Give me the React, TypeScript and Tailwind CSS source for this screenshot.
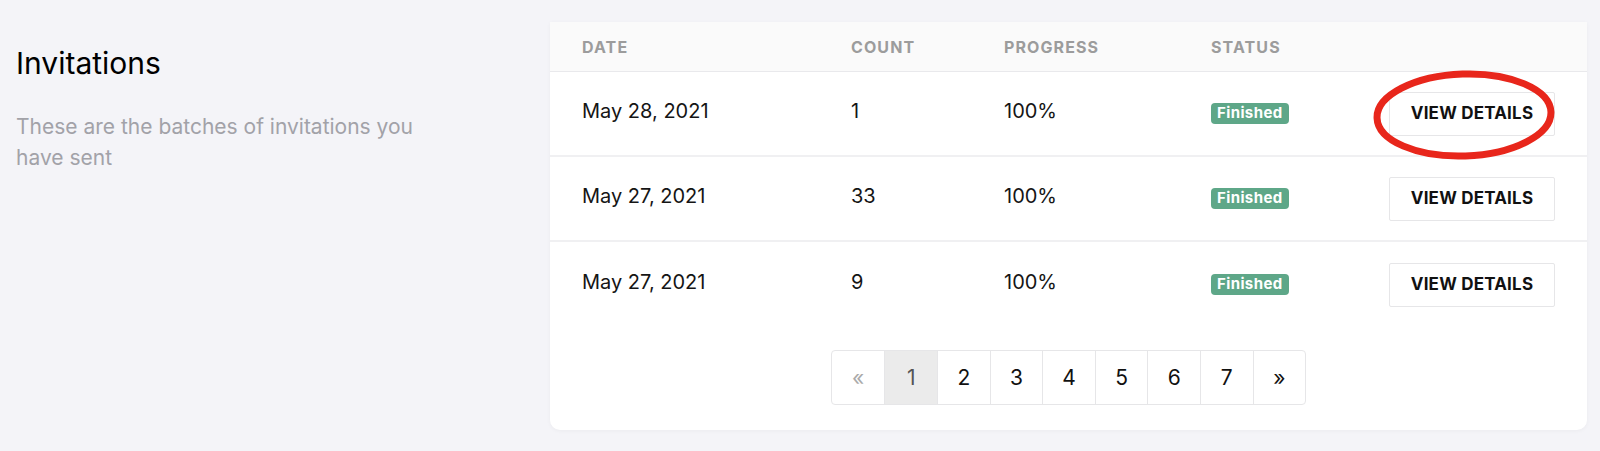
import React from "react";

type Batch = {
    date: string;
    count: number;
    progress: string;
    status: string;
};

const batches: Batch[] = [
    { date: "May 28, 2021", count: 1, progress: "100%", status: "Finished" },
    { date: "May 27, 2021", count: 33, progress: "100%", status: "Finished" },
    { date: "May 27, 2021", count: 9, progress: "100%", status: "Finished" },
];

const pages = ["«", "1", "2", "3", "4", "5", "6", "7", "»"];

const cols = "grid grid-cols-[269px_153px_207px_1fr_166px] items-center px-8";

const App = () => {
    return (
        <div className="flex h-[451px] w-[1600px] bg-[#f4f4f8] font-['Inter',sans-serif] overflow-hidden">
            <div className="w-[550px] pl-4 pt-[45px]">
                <h2 className="text-[30px] leading-[36px] font-normal text-black">Invitations</h2>
                <p className="mt-[30px] w-[420px] text-[21px] leading-[31px] text-[#a2a2a8]">
                    These are the batches of invitations you have sent
                </p>
            </div>

            <div className="mt-[22px] h-[408px] w-[1037px] rounded-b-[10px] bg-white shadow-[0_1px_4px_rgba(0,0,0,0.04)]">
                <div className={`${cols} h-[50px] border-b border-[#e9e9ec] bg-[#fafafa] text-[16px] font-bold tracking-[1.1px] text-[#9c9c9c]`}>
                    <div>DATE</div>
                    <div>COUNT</div>
                    <div>PROGRESS</div>
                    <div>STATUS</div>
                    <div></div>
                </div>

                {batches.map((b, index) => (
                    <div
                        key={index}
                        className={`${cols} h-[85px] text-[20px] text-[#151515] ${index < batches.length - 1 ? "border-b-2 border-[#f0f0f2]" : ""}`}
                    >
                        <div className="pb-[6px]">{b.date}</div>
                        <div className="pb-[6px]">{b.count}</div>
                        <div className="pb-[6px]">{b.progress}</div>
                        <div className="flex">
                            <span className="inline-flex h-[21px] items-center rounded-[4px] bg-[#5ea788] px-[6px] text-[15px] font-bold tracking-[0.4px] text-white">
                                {b.status}
                            </span>
                        </div>
                        <div className="relative">
                            <button className="h-[44px] w-[166px] rounded-[2px] border border-[#e6e6e8] bg-white text-[17px] font-bold tracking-[0.2px] text-[#111]">
                                VIEW DETAILS
                            </button>
                            {index === 0 && (
                                <svg
                                    className="pointer-events-none absolute left-[-20px] top-[-26px] -rotate-2"
                                    width="190"
                                    height="98"
                                    viewBox="0 0 190 98"
                                >
                                    <ellipse cx="95" cy="49" rx="87" ry="41" fill="none" stroke="#e8261b" strokeWidth="7" />
                                </svg>
                            )}
                        </div>
                    </div>
                ))}

                <div className="mt-[23px] flex justify-center">
                    <div className="flex h-[55px] rounded-[4px] border border-[#e6e6e8]">
                        {pages.map((p, i) => (
                            <div
                                key={i}
                                className={`flex w-[52.6px] items-center justify-center text-[21px] ${i > 0 ? "border-l border-[#e6e6e8]" : ""} ${
                                    i === 1 ? "bg-[#ebebeb] text-[#555]" : i === 0 ? "text-[#aaa]" : "text-[#111]"
                                }`}
                            >
                                {p}
                            </div>
                        ))}
                    </div>
                </div>
            </div>
        </div>
    );
};

export default App;
